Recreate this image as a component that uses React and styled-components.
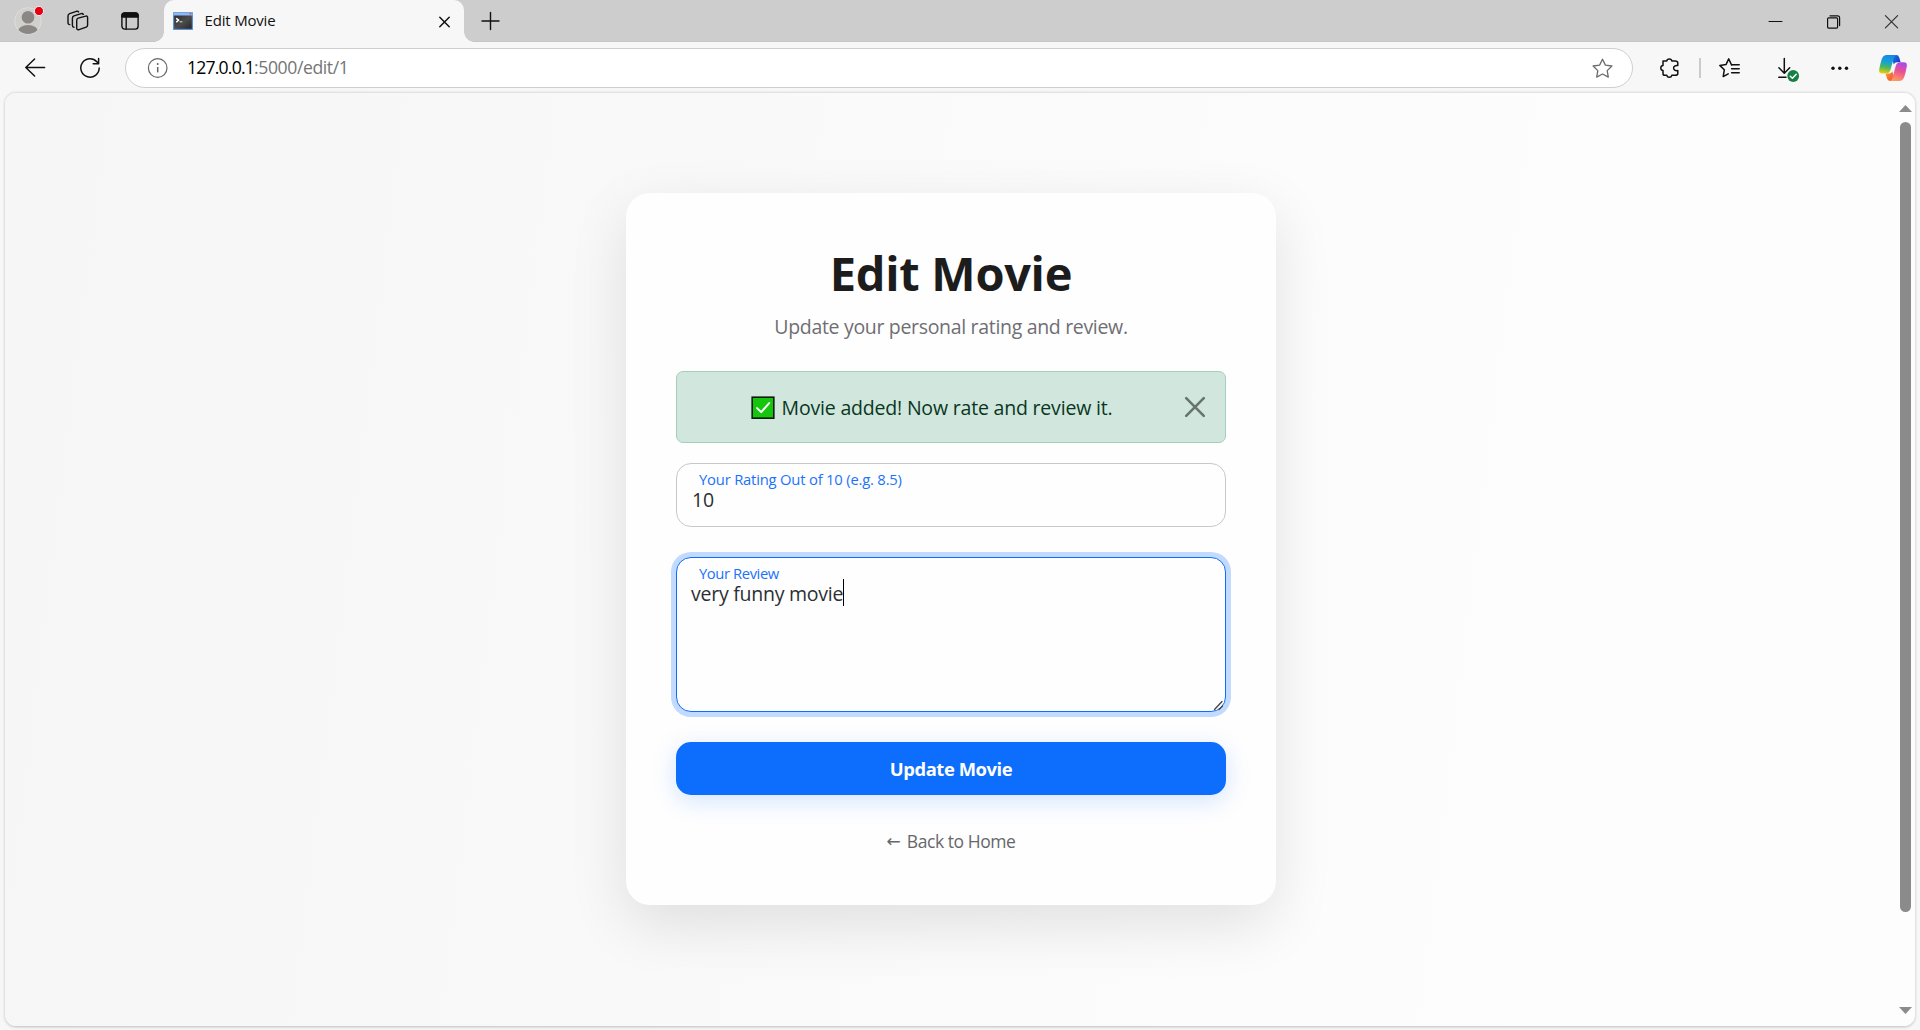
import React from "react";
import styled, { createGlobalStyle } from "styled-components";

const Global = createGlobalStyle`
  * { box-sizing: border-box; }
  body { margin: 0; background: #f7f7f7; font-family: "Open Sans", "Noto Sans", sans-serif; overflow: hidden; }
`;

const Window = styled.div`
  width: 1920px;
  height: 1030px;
  display: flex;
  flex-direction: column;
  background: #f7f7f7;
`;

const TabStrip = styled.div`
  height: 42px;
  display: flex;
  align-items: center;
  background: #cdcdcd;
  box-shadow: inset 0 -1px 0 #c6c6c6;
`;

const Toolbar = styled.div`
  height: 51px;
  display: flex;
  align-items: center;
  padding: 2px 0 1px;
`;

const Icon = styled.svg`
  display: block;
  flex: none;
  width: ${(p) => p.$w}px;
  height: ${(p) => p.$h || p.$w}px;
  margin-left: ${(p) => p.$ml || 0}px;
  overflow: visible;
  fill: none;
  stroke: ${(p) => p.$c || "#111"};
  stroke-width: ${(p) => p.$sw || 1.4};
  stroke-linecap: round;
  stroke-linejoin: round;
`;

const Tab = styled.div`
  position: relative;
  width: 300px;
  height: 42px;
  margin-left: 25px;
  padding-left: 9px;
  display: flex;
  align-items: center;
  background: #f7f7f7;
  border-radius: 10px 10px 0 0;
  &::before, &::after {
    content: "";
    position: absolute;
    bottom: 0;
    width: 10px;
    height: 10px;
  }
  &::before { left: -10px; background: radial-gradient(circle at 0 0, transparent 9.5px, #f7f7f7 10px); }
  &::after { right: -10px; background: radial-gradient(circle at 100% 0, transparent 9.5px, #f7f7f7 10px); }
`;

const TabTitle = styled.div`
  width: 234px;
  margin-left: 11.5px;
  padding-bottom: 2px;
  font-size: 15px;
  line-height: 20px;
  letter-spacing: -0.18px;
  color: #111;
`;

const Spacer = styled.div`flex: 1;`;

const AddressBar = styled.div`
  width: 1508px;
  height: 40px;
  margin-left: 25px;
  padding-left: 22px;
  display: flex;
  align-items: center;
  background: #fff;
  border: 1px solid #cfcfcf;
  border-radius: 20px;
`;

const Url = styled.div`
  flex: 1;
  margin-left: 19px;
  padding-bottom: 3px;
  font-size: 17.6px;
  line-height: 24px;
  letter-spacing: -0.8px;
  color: #000;
`;
const UrlRest = styled.span`color: #757575; letter-spacing: -0.4px;`;

const Divider = styled.div`
  width: 2px;
  height: 20px;
  margin-left: 20px;
  background: #cbcbcb;
`;

const Frame = styled.div`
  width: 1910px;
  height: 933px;
  margin-left: 5px;
  display: flex;
  overflow: hidden;
  border-radius: 11px;
  background: linear-gradient(97deg, #f6f6f6, #f9f9f9 35%, #fcfcfc 65%, #fdfdfd 80%);
  box-shadow: 0 0.5px 3px rgba(0, 0, 0, 0.24);
`;

const Page = styled.main`
  width: 1892px;
  padding-top: 100px;
  display: flex;
  justify-content: center;
  align-items: flex-start;
`;

const ScrollTrack = styled.div`
  flex: 1;
  padding: 12px 0 12px 2px;
  display: flex;
  flex-direction: column;
  align-items: flex-start;
`;
const ScrollThumb = styled.div`
  width: 11px;
  height: 790px;
  margin: 10px 0 95px 1px;
  border-radius: 6px;
  background: #8b8b8b;
`;

const Card = styled.section`
  width: 650px;
  height: 712px;
  padding: 50px 50px 40px;
  display: flex;
  flex-direction: column;
  background: #fefefe;
  border-radius: 24px;
  box-shadow: 0 20px 60px rgba(0, 0, 0, 0.11);
`;

const Title = styled.h1`
  margin: 0;
  font-size: 47px;
  line-height: 60px;
  font-weight: 700;
  letter-spacing: -0.3px;
  text-align: center;
  color: #1c1c1d;
`;

const Subtitle = styled.p`
  margin: 9px 0 29px;
  font-size: 19.5px;
  line-height: 30px;
  letter-spacing: -0.32px;
  text-align: center;
  color: #6e6e73;
`;

const Alert = styled.div`
  height: 72px;
  padding: 0 20px;
  display: flex;
  align-items: center;
  background: #d1e7dd;
  border: 1px solid #a3cfbb;
  border-radius: 7px;
`;
const Message = styled.div`
  flex: 1;
  padding: 2px 19px 0 0;
  display: flex;
  justify-content: center;
  align-items: center;
  gap: 7px;
  font-size: 19.5px;
  line-height: 30px;
  letter-spacing: -0.19px;
  color: #0a3622;
`;

const Field = styled.div`
  position: relative;
  height: ${(p) => p.$h}px;
  margin-top: ${(p) => p.$mt}px;
  padding: 6px 14px;
  background: #fefefe;
  border: 1px solid ${(p) => (p.$focus ? "#0d6efd" : "#c8c8ca")};
  border-radius: 15px;
  box-shadow: ${(p) => (p.$focus ? "0 0 0 5px rgba(13, 110, 253, 0.25)" : "none")};
`;
const Label = styled.label`
  display: block;
  padding-left: 8px;
  font-size: 14.8px;
  line-height: 18px;
  letter-spacing: ${(p) => p.$ls || -0.2}px;
  color: #1a73fa;
`;
const Value = styled.div`
  display: flex;
  padding-left: ${(p) => p.$pl || 0}px;
  font-size: 19.5px;
  line-height: 23px;
  letter-spacing: -0.25px;
  color: #2c2f33;
`;
const Caret = styled.i`
  width: 1px;
  height: 27px;
  margin: -3px 0 0;
  background: #000;
`;
const Grip = styled.div`
  position: absolute;
  right: 2px;
  bottom: 1px;
`;

const Submit = styled.button`
  height: 53px;
  margin: 30px 0 0;
  padding: 0;
  border: 0;
  border-radius: 15px;
  background: #0d6efd;
  box-shadow: 0 6px 24px rgba(13, 110, 253, 0.18);
  font: 700 18.4px/28px "Open Sans", "Noto Sans", sans-serif;
  letter-spacing: -0.42px;
  color: #fff;
`;

const BackLink = styled.a`
  margin-top: 31px;
  display: flex;
  justify-content: center;
  align-items: center;
  gap: 6px;
  font-size: 17.5px;
  line-height: 30px;
  letter-spacing: -0.45px;
  color: #66676b;
`;
const Arrow = styled.span`
  font-family: "DejaVu Sans", sans-serif;
  font-size: 17px;
  letter-spacing: 0;
`;

function Avatar() {
  return (
    <Icon $w={28} $ml={14} viewBox="0 0 28 28" stroke="none">
      <defs><clipPath id="avatar"><circle cx="14" cy="14" r="13" /></clipPath></defs>
      <circle cx="14" cy="14" r="13.3" fill="#d2d0cd" stroke="#e0ded9" strokeWidth="1" />
      <g clipPath="url(#avatar)" fill="#8b8785" stroke="none">
        <circle cx="14" cy="10.3" r="6.3" />
        <ellipse cx="14" cy="25" rx="10.3" ry="7" />
      </g>
      <circle cx="25" cy="4" r="4.6" fill="#e60012" stroke="#efefef" strokeWidth="1" />
    </Icon>
  );
}

function Workspaces() {
  return (
    <Icon $w={22} $ml={25} viewBox="0 0 22 22" $sw={1.4}>
      <path d="M11.2 8.2 18.8 6.1Q20.6 5.8 20.6 7.6V15Q20.6 16.6 19.2 17.1L12 19.7Q9.7 20.2 9.7 18V10.4Q9.7 8.7 11.2 8.2Z" />
      <path d="M7 17.3Q5.4 17.3 5.4 15.6V8.2Q5.4 6.5 7 5.9L14.2 3.6Q15.9 3.3 16.3 4.4" />
      <path d="M2.8 14.6Q1 14.6 1 12.7V5.9Q1 4.2 2.6 3.6L9.4 1.3Q11 .9 11.6 1.9" />
    </Icon>
  );
}

function TabActions() {
  return (
    <Icon $w={18} $ml={32} viewBox="0 0 18 18">
      <rect x=".9" y=".9" width="16.2" height="16.2" rx="2.8" />
      <path d="M.9 5V3.6Q.9.9 3.6.9H14.4Q17.1.9 17.1 3.6V5Z" fill="#111" />
      <path d="M5.2 5V17" />
    </Icon>
  );
}

function Favicon() {
  return (
    <Icon $w={20} $h={18} viewBox="0 0 20 18">
      <defs>
        <linearGradient id="term" x1="0" y1="0" x2="1" y2="1">
          <stop offset="0" stopColor="#2d2d2d" /><stop offset=".5" stopColor="#4c4c4c" /><stop offset="1" stopColor="#262626" />
        </linearGradient>
      </defs>
      <rect width="20" height="18" rx=".8" fill="#5c8fd6" stroke="none" />
      <rect x=".5" y=".5" width="19" height="3" fill="#8db9ee" stroke="none" />
      <rect x="16.6" y="1" width="1.8" height="1.4" fill="#d6544c" stroke="none" />
      <rect x="1.2" y="3.6" width="17.6" height="13.2" fill="url(#term)" stroke="none" />
      <path d="M3.6 6.6 5.6 8.2 3.6 9.8" stroke="#fff" strokeWidth="1.5" />
      <path d="M7 9.8H9" stroke="#ddd" strokeWidth="1" />
    </Icon>
  );
}

const STAR = "M10.5 1.2 13.4 7.1 19.9 8 15.2 12.6 16.3 19.1 10.5 16 4.7 19.1 5.8 12.6 1.1 8 7.6 7.1Z";

function Copilot() {
  return (
    <Icon $w={28} $h={26} $ml={31} viewBox="0 0 28 26">
      <defs>
        <linearGradient id="cpA" x1=".4" y1="0" x2=".25" y2="1">
          <stop offset="0" stopColor="#1688e8" /><stop offset=".35" stopColor="#16a0d8" />
          <stop offset=".65" stopColor="#4bb85a" /><stop offset="1" stopColor="#f3cf0a" />
        </linearGradient>
        <linearGradient id="cpB" x1=".7" y1="0" x2=".4" y2="1">
          <stop offset="0" stopColor="#a34df2" /><stop offset=".45" stopColor="#e94f96" /><stop offset="1" stopColor="#ff9a5c" />
        </linearGradient>
        <linearGradient id="cpC" x1="0" y1="0" x2="1" y2=".6">
          <stop offset="0" stopColor="#1d7fe6" /><stop offset="1" stopColor="#1838c4" />
        </linearGradient>
        <linearGradient id="cpD" x1="0" y1="0" x2="1" y2="1">
          <stop offset="0" stopColor="#f9a321" /><stop offset="1" stopColor="#f0483e" />
        </linearGradient>
      </defs>
      <g stroke="none">
        <path d="M13 0H17.2Q19.5 0 20.2 2.4L21.6 7.2H18Q15.5 7.2 14.8 9.6L13.4 5Z" fill="url(#cpC)" />
        <path d="M15.2 26H11Q8.7 26 8 23.6L6.6 18.6H10Q12.5 18.6 13.2 16.2L14.8 21Z" fill="url(#cpD)" />
        <path d="M7.8 0H17.4Q15.6.5 14.9 2.8L11.4 15Q10.3 18.6 6.8 18.6H3.4Q-.6 18.6.2 14.2Q1 9.6 2.8 4Q4.2 0 7.8 0Z" fill="url(#cpA)" />
        <path d="M20.2 26H10.8Q12.6 25.5 13.3 23.2L16.8 10.8Q17.8 7.2 21.2 7.2H24.6Q28.6 7.2 27.8 11.6Q27 16.4 25.2 22Q23.8 26 20.2 26Z" fill="url(#cpB)" />
      </g>
    </Icon>
  );
}

export default function App() {
  return (
    <Window>
      <Global />
      <TabStrip>
        <Avatar />
        <Workspaces />
        <TabActions />
        <Tab>
          <Favicon />
          <TabTitle>Edit Movie</TabTitle>
          <Icon $w={11} viewBox="0 0 11 11" $sw={1.5}><path d="M.8 1.3 10.2 10.7M10.2 1.3.8 10.7" /></Icon>
        </Tab>
        <Icon $w={17} $ml={18} viewBox="0 0 17 17"><path d="M0 8H17M8.5 -.5V16.5" /></Icon>
        <Spacer />
        <Icon $w={13} viewBox="0 0 13 13" $sw={1}><path d="M0 6.5H13" /></Icon>
        <Icon $w={13} $ml={45} viewBox="0 0 13 13" $sw={1.2}>
          <rect x=".6" y="2.9" width="10" height="10.2" rx="1" />
          <path d="M3 .8H10.6Q12.6.8 12.6 2.8V10.6" />
        </Icon>
        <Icon $w={13} $ml={45} viewBox="0 0 13 13" $sw={1.2} $c="#333"><path d="M.4.7 12.6 12.9M12.6.7.4 12.9" /></Icon>
        <Icon $w={22} viewBox="0 0 22 22" />
      </TabStrip>

      <Toolbar>
        <Icon $w={20} $ml={25} viewBox="0 0 20 20" $sw={1.5}><path d="M19.6 9.5H.8M9.6 1 .8 9.5 9.6 18" /></Icon>
        <Icon $w={20} $ml={35} viewBox="0 0 20 20" $sw={1.5}>
          <path d="M19.2 10A9.2 9.2 0 1 1 16.8 3.8L18.5 5.6M18.6.6V5.8H13.2" />
        </Icon>
        <AddressBar>
          <Icon $w={20} viewBox="0 0 20 20" $c="#666" $sw={1.2}>
            <circle cx="9.7" cy="10" r="9.3" />
            <path d="M9.7 9V14.4" strokeWidth="1.5" strokeLinecap="butt" />
            <circle cx="9.7" cy="6" r="1" fill="#666" stroke="none" />
          </Icon>
          <Url>127.0.0.1<UrlRest>:5000/edit/1</UrlRest></Url>
          <Icon $w={21} viewBox="0 0 21 21" $c="#6b6b6b" $sw={1.3}><path d={STAR} /></Icon>
          <Icon $w={19} viewBox="0 0 19 19" />
        </AddressBar>
        <Icon $w={19} $h={20} $ml={27} viewBox="0 0 19 20" $sw={1.5}>
          <path d="M3 3H6.8Q7 .9 9.3.9T11.8 3H15Q17.8 3 17.8 5V7.6Q13.6 7.2 13.6 10.1T17.8 12.6V15.4Q17.8 17.3 15 17.3H11.8Q11.4 19.3 9.3 19.3T6.8 17.3H4.8Q3 17.3 3 15.4V12.6Q.8 12.3.8 10.1T3 7.6Z" />
        </Icon>
        <Divider />
        <Icon $w={21} $h={20} $ml={18} viewBox="0 0 21 20" $sw={1.5}>
          <path d="M12.6 7 9.7.9 7 6.6.8 7.4 5.3 11.8 4.2 18.6 9.2 15.8" />
          <path d="M12.6 6.8H20.2M12.6 10.8H20.2M12.6 14.8H20.2" />
        </Icon>
        <Icon $w={22} $h={20} $ml={38} viewBox="0 0 22 20" $sw={1.5}>
          <path d="M6.3.4V14.8M.9 9.8 6.3 15.2 11.7 9.8M.8 19.3H8" />
          <circle cx="15.2" cy="18" r="5.9" fill="#158043" stroke="none" />
          <path d="M12.3 18.3 14.4 20.3 18.2 16.2" stroke="#fff" />
        </Icon>
        <Icon $w={17} $ml={31} viewBox="0 0 17 17">
          <g fill="#111" stroke="none"><circle cx="2" cy="8.3" r="1.7" /><circle cx="8.8" cy="8.3" r="1.7" /><circle cx="15.5" cy="8.3" r="1.7" /></g>
        </Icon>
        <Copilot />
      </Toolbar>

      <Frame>
        <Page>
          <Card>
            <Title>Edit Movie</Title>
            <Subtitle>Update your personal rating and review.</Subtitle>
            <Alert>
              <Message>
                <Icon $w={24} viewBox="0 0 24 24">
                  <rect x="1.2" y="1.2" width="21.6" height="21" fill="#16c60c" stroke="#0b1a0b" strokeWidth="1.6" strokeLinejoin="miter" />
                  <path d="M6 12.1 10.2 16.1 18.2 7.1" stroke="#fff" strokeWidth="2" />
                </Icon>
                Movie added! Now rate and review it.
              </Message>
              <Icon $w={20} viewBox="0 0 20 20" $c="#68746e" $sw={2.6}><path d="M1.2 1.2 18.8 18.8M18.8 1.2 1.2 18.8" /></Icon>
            </Alert>
            <Field $h={64} $mt={20}>
              <Label>Your Rating Out of 10 (e.g. 8.5)</Label>
              <Value $pl={1}>10</Value>
            </Field>
            <Field $h={155} $mt={30} $focus>
              <Label $ls={-0.42}>Your Review</Label>
              <Value>very funny movie<Caret /></Value>
              <Grip>
                <Icon $w={9} viewBox="0 0 9 9" $c="#444" $sw={1.3}><path d="M.5 8.5 8 .5M5 8.5 8.5 5" /></Icon>
              </Grip>
            </Field>
            <Submit>Update Movie</Submit>
            <BackLink><Arrow>←</Arrow>Back to Home</BackLink>
          </Card>
        </Page>
        <ScrollTrack>
          <Icon $w={13} $h={7} viewBox="0 0 13 7"><path d="M0 7 6.5 0 13 7Z" fill="#8b8b8b" stroke="none" /></Icon>
          <ScrollThumb />
          <Icon $w={13} $h={7} viewBox="0 0 13 7"><path d="M0 0 6.5 7 13 0Z" fill="#8b8b8b" stroke="none" /></Icon>
        </ScrollTrack>
      </Frame>
    </Window>
  );
}
